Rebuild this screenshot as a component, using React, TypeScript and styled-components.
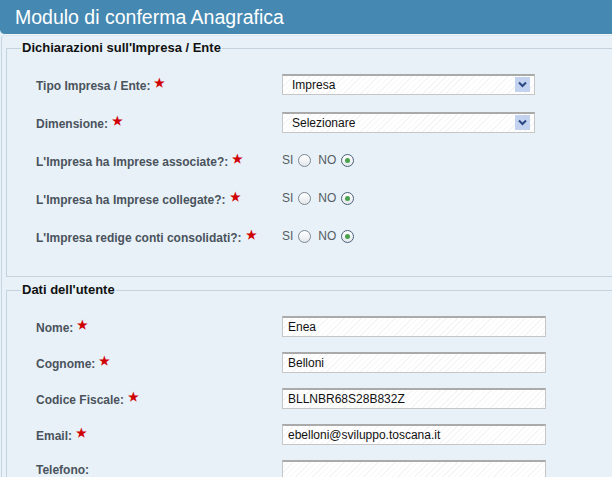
import React from 'react';
import styled, { createGlobalStyle } from 'styled-components';

const GlobalStyle = createGlobalStyle`
  html, body {
    margin: 0;
    padding: 0;
    overflow: hidden;
    background: #e7f1f8;
    font-family: 'Liberation Sans', Arial, Helvetica, sans-serif;
  }
`;

const Page = styled.div`
  width: 640px;
`;

const Header = styled.div`
  height: 34px;
  line-height: 34px;
  background: #4589b2;
  border-bottom-left-radius: 5px;
  border-bottom: 1px solid #f2f7fb;
  color: #fff;
  font-size: 19.5px;
  padding-left: 15px;
`;

const Panel = styled.div`
  margin-left: 1px;
  padding: 4px 0 0 4px;
  border-left: 1px solid #c6d5e0;
  border-top: 1px solid #dbe7f0;
  border-top-left-radius: 4px;
  background: #e8f1f8;
`;

const Fieldset = styled.fieldset<{ $pitch: number; $top: number; $bottom: number }>`
  margin: 0 0 5px 0;
  padding: ${p => p.$top}px 0 ${p => p.$bottom}px 0;
  border: 1px solid #c3d2dd;
  min-width: 0;

  & > div {
    height: ${p => p.$pitch}px;
  }
`;

const Legend = styled.legend`
  margin-left: 14px;
  padding: 0 1px;
  font-size: 13px;
  line-height: 16px;
  font-weight: 700;
  color: #111;
`;

const Row = styled.div`
  display: flex;
  align-items: center;
  padding-left: 29px;
`;

const Label = styled.label`
  width: 246px;
  flex-shrink: 0;
  font-size: 12px;
  font-weight: 700;
  color: #4a535c;
`;

const Star = styled.span`
  color: #d00000;
  font-size: 12px;
  margin-left: 4px;
  vertical-align: 3px;
`;

const fieldLook = `
  box-sizing: border-box;
  height: 21px;
  border: 1px solid #c6c6c6;
  border-top: 2px solid #aaaaaa;
  background: repeating-linear-gradient(135deg, #ffffff 0 3px, #f5f5f5 3px 4px);
  font-family: 'Liberation Sans', Arial, sans-serif;
  font-size: 12px;
  color: #111;
`;

const SelectBox = styled.div`
  ${fieldLook}
  width: 253px;
  display: flex;
  align-items: center;
  justify-content: space-between;
  padding: 0 4px 0 9px;
`;

const ArrowBox = styled.span`
  width: 15px;
  height: 15px;
  background: #c3d3ef;
  display: flex;
  align-items: center;
  justify-content: center;
`;

const TextInput = styled.input`
  ${fieldLook}
  width: 264px;
  padding: 0 5px;
  outline: none;
`;

const RadioGroup = styled.div`
  display: flex;
  align-items: center;
  font-size: 12px;
  color: #555c63;
`;

const RadioText = styled.span`
  margin-right: 5px;
`;

const Radio = styled.span<{ $checked?: boolean }>`
  box-sizing: border-box;
  width: 13px;
  height: 13px;
  border-radius: 50%;
  border: 1px solid ${p => (p.$checked ? '#4a6178' : '#7c8792')};
  background: linear-gradient(#ffffff, #e4e8ec);
  margin-right: 7px;
  display: flex;
  align-items: center;
  justify-content: center;

  &::after {
    content: '';
    display: ${p => (p.$checked ? 'block' : 'none')};
    width: 5px;
    height: 5px;
    border-radius: 50%;
    background: #49a24c;
  }
`;

const Chevron = () => (
  <svg width="9" height="7" viewBox="0 0 9 7">
    <path d="M1 1.5 L4.5 5 L8 1.5" fill="none" stroke="#2b4883" strokeWidth="2" />
  </svg>
);

const Select = ({ value }: { value: string }) => (
  <SelectBox>
    <span>{value}</span>
    <ArrowBox>
      <Chevron />
    </ArrowBox>
  </SelectBox>
);

const YesNo = () => (
  <RadioGroup>
    <RadioText>SI</RadioText>
    <Radio />
    <RadioText>NO</RadioText>
    <Radio $checked />
  </RadioGroup>
);

const Field = ({ label, required, children }: { label: string; required?: boolean; children: React.ReactNode }) => (
  <Row>
    <Label>
      {label}
      {required && <Star>★</Star>}
    </Label>
    {children}
  </Row>
);

const users = [
  { label: 'Nome:', value: 'Enea', required: true },
  { label: 'Cognome:', value: 'Belloni', required: true },
  { label: 'Codice Fiscale:', value: 'BLLNBR68S28B832Z', required: true },
  { label: 'Email:', value: 'ebelloni@sviluppo.toscana.it', required: true },
  { label: 'Telefono:', value: '', required: false },
];

export default function App() {
  return (
    <Page>
      <GlobalStyle />
      <Header>Modulo di conferma Anagrafica</Header>
      <Panel>
        <Fieldset $pitch={38} $top={9} $bottom={21}>
          <Legend>Dichiarazioni sull'Impresa / Ente</Legend>
          <Field label="Tipo Impresa / Ente:" required>
            <Select value="Impresa" />
          </Field>
          <Field label="Dimensione:" required>
            <Select value="Selezionare" />
          </Field>
          <Field label="L'Impresa ha Imprese associate?:" required>
            <YesNo />
          </Field>
          <Field label="L'Impresa ha Imprese collegate?:" required>
            <YesNo />
          </Field>
          <Field label="L'Impresa redige conti consolidati?:" required>
            <YesNo />
          </Field>
        </Fieldset>
        <Fieldset $pitch={36} $top={10} $bottom={20}>
          <Legend>Dati dell'utente</Legend>
          {users.map(u => (
            <Field key={u.label} label={u.label} required={u.required}>
              <TextInput defaultValue={u.value} />
            </Field>
          ))}
        </Fieldset>
      </Panel>
    </Page>
  );
}
